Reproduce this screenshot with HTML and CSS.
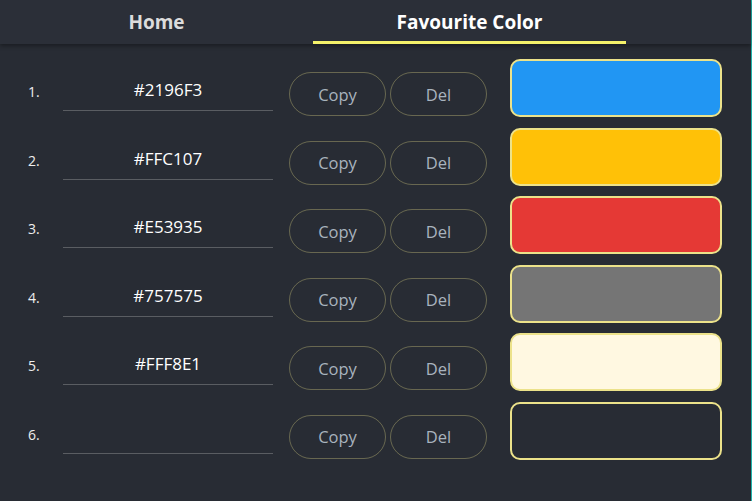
FILE: index.html
```html
<!DOCTYPE html>
<html>
<head>
<meta charset="utf-8">
<link rel="stylesheet" href="styles.css">
</head>
<body>
<div class="app">
  <header class="header">
    <nav class="tabs">
      <div class="tab">Home</div>
      <div class="tab active">Favourite Color</div>
    </nav>
  </header>
  <main class="list">
    <div class="row">
      <div class="num">1.</div>
      <div class="field">#2196F3</div>
      <div class="btns"><button class="btn">Copy</button><button class="btn">Del</button></div>
      <div class="swatch" style="background:#2196F3"></div>
    </div>
    <div class="row">
      <div class="num">2.</div>
      <div class="field">#FFC107</div>
      <div class="btns"><button class="btn">Copy</button><button class="btn">Del</button></div>
      <div class="swatch" style="background:#FFC107"></div>
    </div>
    <div class="row">
      <div class="num">3.</div>
      <div class="field">#E53935</div>
      <div class="btns"><button class="btn">Copy</button><button class="btn">Del</button></div>
      <div class="swatch" style="background:#E53935"></div>
    </div>
    <div class="row">
      <div class="num">4.</div>
      <div class="field">#757575</div>
      <div class="btns"><button class="btn">Copy</button><button class="btn">Del</button></div>
      <div class="swatch" style="background:#757575"></div>
    </div>
    <div class="row">
      <div class="num">5.</div>
      <div class="field">#FFF8E1</div>
      <div class="btns"><button class="btn">Copy</button><button class="btn">Del</button></div>
      <div class="swatch" style="background:#FFF8E1"></div>
    </div>
    <div class="row">
      <div class="num">6.</div>
      <div class="field"></div>
      <div class="btns"><button class="btn">Copy</button><button class="btn">Del</button></div>
      <div class="swatch"></div>
    </div>
  </main>
</div>
</body>
</html>
```

FILE: styles.css
```css
html, body {
  margin: 0;
  padding: 0;
  background: #282c34;
}
body {
  font-family: "Open Sans", "Noto Sans", sans-serif;
  color: #ffffff;
}
.app {
  width: 751px;
  height: 501px;
  border-right: 1px solid #20b2aa;
  background: #282c34;
}
.header {
  height: 44px;
  background: #2b2f38;
  box-shadow: 0 2px 4px rgba(0, 0, 0, 0.35);
  position: relative;
}
.tabs {
  display: flex;
  height: 44px;
}
.tab {
  width: 313px;
  box-sizing: border-box;
  height: 44px;
  text-align: center;
  font-weight: 700;
  font-size: 19px;
  line-height: 45px;
  color: #dcdcdc;
}
.tab.active {
  color: #ffffff;
  border-bottom: 3px solid #f5f26a;
}
.list {
  display: flex;
  flex-direction: column;
  gap: 10.6px;
  padding-top: 15px;
}
.row {
  display: flex;
  align-items: flex-start;
  height: 58px;
}
.num {
  width: 35px;
  padding-left: 28px;
  margin-top: 24px;
  font-size: 14px;
  line-height: 18px;
  color: #eeeeee;
}
.field {
  width: 210px;
  height: 39px;
  margin-top: 12px;
  border-bottom: 1px solid #5a5d62;
  text-align: center;
  font-size: 17px;
  line-height: 38px;
  color: #ffffff;
}
.btns {
  display: flex;
  gap: 4px;
  margin-left: 16px;
  margin-top: 13px;
}
.btn {
  width: 97px;
  height: 44px;
  border-radius: 22px;
  border: 1px solid rgba(240, 230, 140, 0.32);
  background: transparent;
  color: #a8b3be;
  font-family: "Open Sans", "Noto Sans", sans-serif;
  font-size: 16.5px;
  padding: 0;
}
.swatch {
  width: 212px;
  height: 58px;
  box-sizing: border-box;
  margin-left: 23px;
  border: 2px solid #ece28a;
  border-radius: 10px;
}
```
